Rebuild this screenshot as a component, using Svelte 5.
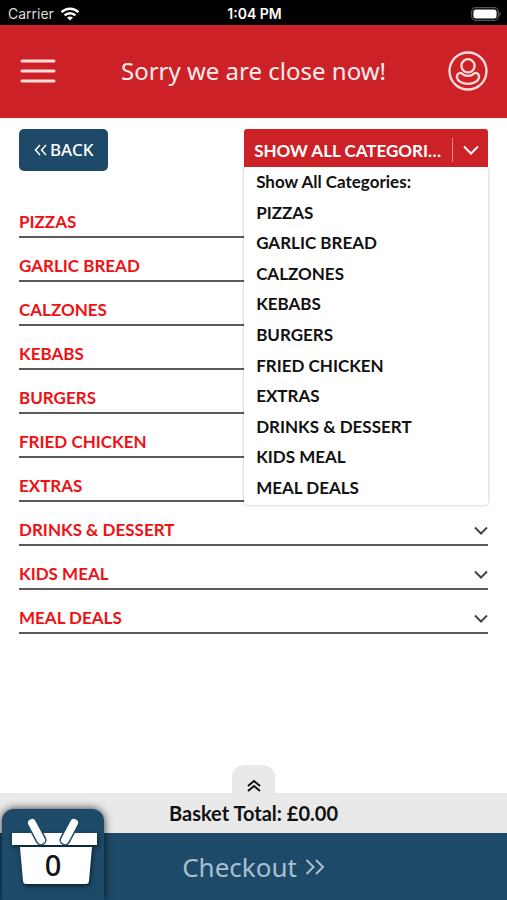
<script>
    const PLACEHOLDER = 'Show All Categories:';

    const categories = [
        'PIZZAS',
        'GARLIC BREAD',
        'CALZONES',
        'KEBABS',
        'BURGERS',
        'FRIED CHICKEN',
        'EXTRAS',
        'DRINKS & DESSERT',
        'KIDS MEAL',
        'MEAL DEALS'
    ];

    let selected = $state(PLACEHOLDER);
    let menuOpen = $state(true);
    let basketCount = $state(0);
    let basketTotal = $state(0);

    let visible = $derived(
        selected === PLACEHOLDER ? categories : categories.filter((c) => c === selected)
    );

    // The styled menu replaces the native popup
    function toggleMenu(event) {
        event.preventDefault();
        menuOpen = !menuOpen;
    }

    function choose(option) {
        selected = option;
        menuOpen = false;
    }
</script>

<div class="page">
    <div class="status-bar">
        <div class="carrier">
            <span>Carrier</span>
            <svg width="20" height="14" viewBox="0 0 20 14" fill="none" stroke="#fff" stroke-width="2.5">
                <path d="M1.5 5.2C6.3.6 13.7.6 18.5 5.2" />
                <path d="M4.6 8.4c3.1-2.9 7.7-2.9 10.8 0" />
                <path d="M7 10.6c1.7-1.6 4.3-1.6 6 0l-3 3z" fill="#fff" stroke="none" />
            </svg>
        </div>
        <div class="time">1:04 PM</div>
        <div class="battery">
            <svg width="30" height="14" viewBox="0 0 30 14">
                <rect x="0.7" y="0.7" width="26.6" height="12.6" rx="4" fill="none" stroke="#555" stroke-width="1.3" />
                <rect x="2.4" y="2.4" width="23.2" height="9.2" rx="2.5" fill="#fff" />
                <path d="M28.4 5c1.6.5 1.6 3.5 0 4z" fill="#666" />
            </svg>
        </div>
    </div>

    <header>
        <button class="icon-button" aria-label="Menu">
            <svg width="38" height="26" viewBox="0 0 38 26" stroke="#ffdcdc" stroke-width="3" stroke-linecap="round">
                <path d="M3 3h32M3 13h32M3 23h32" />
            </svg>
        </button>
        <h1>Sorry we are close now!</h1>
        <button class="icon-button" aria-label="Account">
            <svg width="40" height="40" viewBox="0 0 40 40" fill="none" stroke="#ffdcdc" stroke-width="2.3">
                <circle cx="20" cy="20" r="18.5" />
                <circle cx="20" cy="14.8" r="6.6" />
                <path d="M11.5 22c-1.8.8-2.8 2.7-2.5 4.6.4 3.200 5.200 6.200 11 6.200s10.600-3 11-6.200c.3-1.900-.7-3.800-2.500-4.600-1-.4-1.800-.1-2.500.6-1.500 1.500-3.600 2.300-6 2.300s-4.500-.8-6-2.300c-.7-.7-1.500-1-2.500-.6z" />
            </svg>
        </button>
    </header>

    <main>
        <div class="toolbar">
            <button class="back">
                <svg width="13" height="12" viewBox="0 0 13 12" fill="none" stroke="#fff" stroke-width="1.5">
                    <path d="M6 1L1.5 6 6 11M12 1L7.5 6l4.5 5" />
                </svg>
                BACK
            </button>

            <div class="picker">
                <div class="picker-head">
                    <select aria-label="Category" bind:value={selected} onmousedown={toggleMenu}>
                        <option value={PLACEHOLDER}>{PLACEHOLDER}</option>
                        {#each categories as category}
                            <option value={category}>{category}</option>
                        {/each}
                    </select>
                    <span class="picker-arrow">
                        <svg width="16" height="10" viewBox="0 0 16 10" fill="none" stroke="#fff" stroke-width="2">
                            <path d="M1 1.5l7 7 7-7" />
                        </svg>
                    </span>
                </div>
                {#if menuOpen}
                    <ul class="picker-menu">
                        {#each [PLACEHOLDER, ...categories] as option}
                            <li><button onclick={() => choose(option)}>{option}</button></li>
                        {/each}
                    </ul>
                {/if}
            </div>
        </div>

        <ul class="categories">
            {#each visible as category}
                <li>
                    <button>
                        {category}
                        <svg width="14" height="9" viewBox="0 0 14 9" fill="none" stroke="#444" stroke-width="2">
                            <path d="M1 1.5l6 6 6-6" />
                        </svg>
                    </button>
                </li>
            {/each}
        </ul>
    </main>

    <footer>
        <button class="expand" aria-label="Show basket">
            <svg width="14" height="14" viewBox="0 0 14 14" fill="none" stroke="#111" stroke-width="2">
                <path d="M1 7l6-5 6 5M1 12l6-5 6 5" />
            </svg>
        </button>
        <div class="total">Basket Total: £{basketTotal.toFixed(2)}</div>
        <div class="checkout-row">
            <button class="checkout">
                Checkout
                <svg width="20" height="16" viewBox="0 0 20 16" fill="none" stroke="#a9bfd0" stroke-width="2">
                    <path d="M1.5 1l7 7-7 7M11 1l7 7-7 7" />
                </svg>
            </button>
            <button class="basket" aria-label="Basket">
                <svg width="102" height="91" viewBox="0 0 102 91">
                    <g class="basket-shape" fill="#fff">
                        <path d="M10 24h85v12H10z" />
                        <path d="M18 38h72l-3 34q-.3 3-3 3H24q-2.7 0-3-3z" />
                    </g>
                    <g stroke-linecap="round">
                        <path d="M30 14l9 17M72 14l-9 17" stroke="#1d4a68" stroke-width="11" />
                        <path d="M30 14l9 17M72 14l-9 17" stroke="#fff" stroke-width="8" />
                    </g>
                </svg>
                <span class="count">{basketCount}</span>
            </button>
        </div>
    </footer>
</div>

<style>
    :global(body) {
        margin: 0;
        background: #fff;
    }

    .page {
        min-height: 100vh;
        display: flex;
        flex-direction: column;
        font-family: Lato, sans-serif;
        font-size: 17px;
        font-weight: 700;
        line-height: 24px;
        color: #111;
    }

    button,
    select {
        font: inherit;
        color: inherit;
        margin: 0;
        padding: 0;
        border: none;
        background: none;
        cursor: pointer;
    }

    svg {
        display: block;
        flex: none;
    }

    ul {
        list-style: none;
        margin: 0;
        padding: 0;
    }

    /* Phone status bar */
    .status-bar {
        display: grid;
        grid-template-columns: 1fr auto 1fr;
        align-items: center;
        height: 25px;
        padding: 2px 6px 0 8px;
        box-sizing: border-box;
        background: #000;
        color: #fff;
        font: 600 14px/20px Inter, sans-serif;
    }

    .carrier {
        display: flex;
        align-items: center;
        gap: 6px;
        font-weight: 400;
        color: #ddd;
    }

    .battery {
        display: flex;
        justify-content: flex-end;
    }

    header {
        display: flex;
        align-items: center;
        justify-content: space-between;
        height: 93px;
        padding: 0 19px 2px;
        box-sizing: border-box;
        background: #cd2128;
        color: #ffecec;
    }

    h1 {
        margin: 0;
        font: 400 24px/32px "Noto Sans", sans-serif;
    }

    .icon-button {
        width: 40px;
        height: 40px;
        display: flex;
        align-items: center;
    }

    main {
        flex: 1;
        padding: 11px 19px 24px;
    }

    .toolbar {
        display: flex;
        justify-content: space-between;
        align-items: flex-start;
    }

    .back {
        display: flex;
        align-items: center;
        justify-content: center;
        gap: 3px;
        height: 42px;
        padding: 0 15px;
        border-radius: 5px;
        background: #1d4a68;
        color: #fff;
        font: 500 17px/24px "Noto Sans", sans-serif;
    }

    .picker {
        position: relative;
        width: 52%;
    }

    .picker-head {
        display: flex;
        align-items: center;
        height: 38px;
        border-radius: 3px 3px 0 0;
        background: #cd2128;
        color: #fff;
    }

    .picker-head select {
        flex: 1;
        min-width: 0;
        height: 38px;
        padding: 6px 8px 0 10px;
        appearance: none;
        text-transform: uppercase;
        overflow: hidden;
        white-space: nowrap;
        text-overflow: ellipsis;
    }

    .picker-head option {
        color: #111;
    }

    .picker-arrow {
        display: flex;
        align-items: center;
        justify-content: center;
        width: 35px;
        height: 24px;
        margin-top: 4px;
        border-left: 1px solid #e58c8f;
        pointer-events: none;
    }

    .picker-menu {
        position: absolute;
        top: 100%;
        left: 0;
        right: 0;
        display: grid;
        grid-auto-rows: 1fr;
        height: 338px;
        padding-bottom: 2px;
        box-sizing: border-box;
        border-radius: 0 0 3px 3px;
        background: #fff;
        box-shadow: 0 0 3px rgba(0, 0, 0, 0.3);
        clip-path: inset(0 -4px -4px -4px);
    }

    .picker-menu li {
        display: flex;
    }

    .picker-menu button {
        flex: 1;
        padding-left: 12px;
        text-align: left;
    }

    .categories {
        margin-top: 23px;
    }

    .categories li {
        border-bottom: 2px solid #5a5a5a;
    }

    .categories button {
        width: 100%;
        display: flex;
        align-items: center;
        justify-content: space-between;
        padding: 16px 0 2px;
        color: #f01014;
    }

    /* Basket summary and checkout */
    footer {
        position: sticky;
        bottom: 0;
        display: flex;
        flex-direction: column;
    }

    .expand {
        align-self: center;
        display: flex;
        align-items: flex-end;
        justify-content: center;
        width: 43px;
        height: 28px;
        border-radius: 12px 12px 0 0;
        background: #e9e9e9;
    }

    .total {
        height: 40px;
        background: #e9e9e9;
        text-align: center;
        font-size: 20px;
        line-height: 40px;
    }

    .checkout-row {
        position: relative;
        background: #1d4a68;
    }

    .checkout {
        display: flex;
        align-items: center;
        justify-content: center;
        gap: 8px;
        width: 100%;
        height: 67px;
        color: #a9bfd0;
        font: 400 26px/32px "Noto Sans", sans-serif;
    }

    .basket {
        position: absolute;
        left: 2px;
        bottom: 0;
        display: grid;
        justify-items: center;
        border-radius: 12px 12px 0 0;
        background: #1d4a68;
        box-shadow: 0 0 8px rgba(0, 0, 0, 0.8);
    }

    .basket-shape {
        filter: drop-shadow(1px 2px 2px rgba(0, 0, 0, 0.6));
    }

    .basket > * {
        grid-area: 1 / 1;
    }

    .count {
        padding-top: 40px;
        font: 500 29px/32px "Noto Sans", sans-serif;
    }
</style>
